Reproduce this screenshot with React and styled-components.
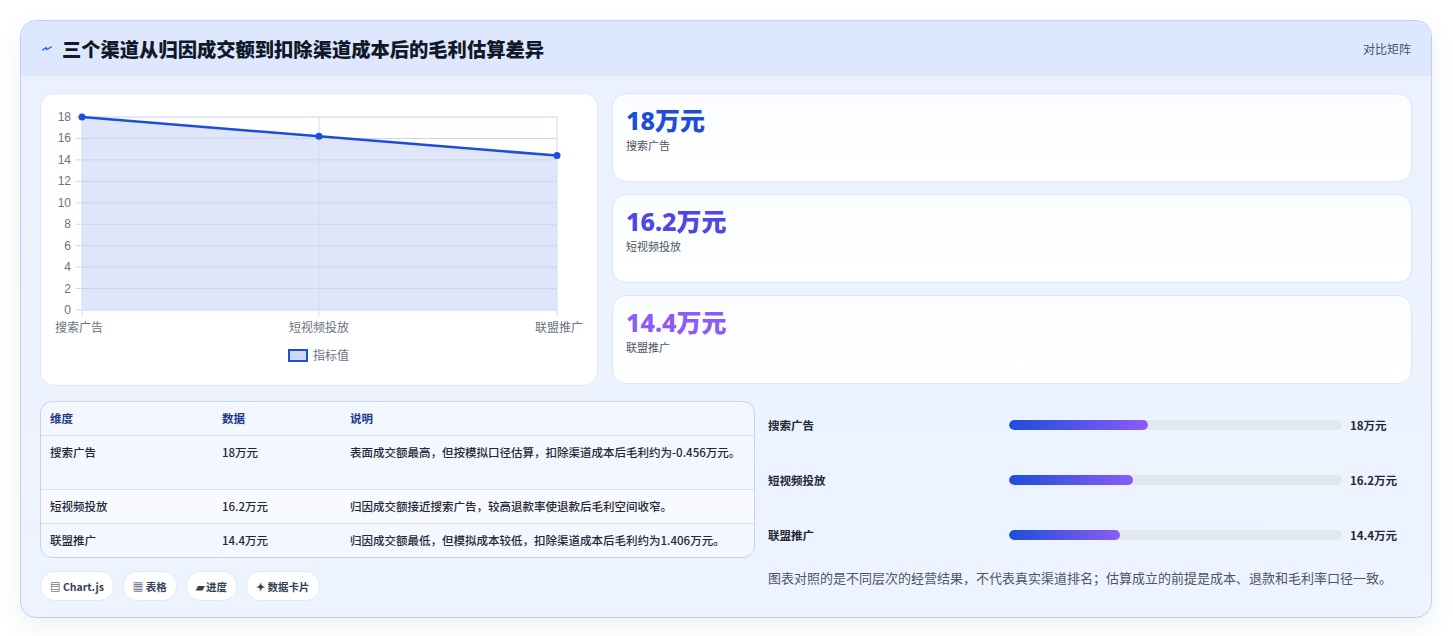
import React from "react";
import styled, { createGlobalStyle } from "styled-components";

const Global = createGlobalStyle`
  html, body { margin: 0; background: #ffffff; }
  body { font-family: "Noto Sans CJK SC", "Noto Sans", sans-serif; }
`;

const Page = styled.div`
  padding: 20px 21px 22px 20px;
`;

const Card = styled.div`
  border: 1px solid #c3cdf5;
  border-radius: 16px;
  overflow: hidden;
  background: linear-gradient(180deg, #eaf0fd 0%, #eef4ff 100%);
  box-shadow: 0 8px 24px rgba(30, 58, 138, 0.08);
`;

const Header = styled.div`
  height: 55px;
  display: flex;
  align-items: center;
  justify-content: space-between;
  padding: 0 20px;
  background: #dde7fe;
`;

const Title = styled.h1`
  margin: 0;
  display: flex;
  align-items: center;
  gap: 9px;
  font-size: 19.3px;
  font-weight: 800;
  color: #111827;
`;

const Badge = styled.span`
  font-size: 12px;
  color: #475569;
`;

const Body = styled.div`
  padding: 17px 19px 16px 19px;
  display: flex;
  flex-direction: column;
  gap: 15px;
`;

const Grid = styled.div`
  display: grid;
  grid-template-columns: ${(p) => p.$left}px 1fr;
  column-gap: ${(p) => p.$gap}px;
`;

const ChartCard = styled.div`
  height: 291px;
  background: #ffffff;
  border: 1px solid #e0e7fb;
  border-radius: 14px;
  overflow: hidden;
`;

const Stats = styled.div`
  display: flex;
  flex-direction: column;
  gap: 12px;
`;

const Stat = styled.div`
  height: 89px;
  box-sizing: border-box;
  padding: 9px 13px;
  background: linear-gradient(180deg, #fbfcff, #ffffff);
  border: 1px solid #dde5fb;
  border-radius: 14px;
`;

const StatValue = styled.div`
  font-family: "Noto Sans", "Noto Sans CJK SC", sans-serif;
  font-size: 25px;
  font-weight: 800;
  line-height: 34px;
  color: ${(p) => p.$color};
`;

const StatLabel = styled.div`
  font-size: 11px;
  color: #4b5563;
`;

const Table = styled.div`
  border: 1px solid #c9d3ee;
  border-radius: 12px;
  overflow: hidden;
  background: #f3f7ff;
  font-size: 11.5px;
`;

const Row = styled.div`
  display: grid;
  grid-template-columns: 172px 128px 1fr;
  padding: 8px 9px;
  border-top: ${(p) => (p.$head ? "none" : "1px solid #d6def2")};
  background: ${(p) => (p.$alt ? "#f8faff" : "transparent")};
  color: ${(p) => (p.$head ? "#1e3a8a" : "#1f2937")};
  font-weight: ${(p) => (p.$head ? 700 : 500)};
  line-height: 17px;
  min-height: ${(p) => (p.$tall ? "37px" : "17px")};
`;

const Chips = styled.div`
  display: flex;
  gap: 9px;
  margin-top: 13px;
`;

const Chip = styled.span`
  height: 28px;
  padding: 0 9px;
  display: inline-flex;
  align-items: center;
  gap: 3px;
  border-radius: 14px;
  background: #ffffff;
  border: 1px solid #e3e8f5;
  font-size: 10.5px;
  font-weight: 600;
  color: #334155;
`;

const Progress = styled.div`
  margin-top: -4px;
  padding: 0 14px 0 0;
  display: flex;
  flex-direction: column;
`;

const PRow = styled.div`
  height: 55px;
  display: grid;
  grid-template-columns: 233px 333px 1fr;
  column-gap: 8px;
  align-items: center;
  font-size: 11.5px;
  font-weight: 600;
  color: #1f2937;
`;

const Track = styled.div`
  height: 10px;
  border-radius: 5px;
  background: #e2e8f0;
  overflow: hidden;
`;

const Fill = styled.div`
  height: 100%;
  border-radius: 5px;
  background: linear-gradient(90deg, #1d4ed8, #8b5cf6);
`;

const Note = styled.p`
  margin: 6px 0 0;
  font-size: 13px;
  color: #4b5563;
`;

const Bolt = () => (
  <svg width="12" height="12" viewBox="0 0 24 24">
    <path d="M3 14 L10 9 L11 13 L21 8" fill="none" stroke="#2563eb" strokeWidth="2.5" strokeLinecap="round" />
  </svg>
);

const data = [
  { label: "搜索广告", value: 18, color: "#1d4ed8" },
  { label: "短视频投放", value: 16.2, color: "#4f46e5" },
  { label: "联盟推广", value: 14.4, color: "#8b5cf6" },
];

const Chart = () => {
  const x0 = 41, x1 = 516, y0 = 216, yTop = 23;
  const sy = (v) => y0 - ((y0 - yTop) * v) / 18;
  const xs = [x0, (x0 + x1) / 2 - 0.5, x1];
  const pts = data.map((d, i) => [xs[i], sy(d.value)]);
  const ticks = [0, 2, 4, 6, 8, 10, 12, 14, 16, 18];
  return (
    <svg width="558" height="291" style={{ display: "block" }}>
      <polygon
        points={`${x0},${y0} ${pts.map((p) => p.join(",")).join(" ")} ${x1},${y0}`}
        fill="#dfe6f9"
      />
      {ticks.map((t) => (
        <g key={t}>
          <line x1={x0 - 6} x2={x1} y1={sy(t)} y2={sy(t)} stroke="#ccd4ea" strokeWidth="1" />
          <text x={x0 - 11} y={sy(t) + 4} textAnchor="end" fontSize="12" fill="#6b7280" fontFamily="Liberation Sans, sans-serif">{t}</text>
        </g>
      ))}
      {xs.map((x, i) => (
        <line key={i} x1={x} x2={x} y1={yTop} y2={y0 + 6} stroke="#d4dbee" />
      ))}
      <polyline points={pts.map((p) => p.join(",")).join(" ")} fill="none" stroke="#1d4ed8" strokeWidth="2.5" />
      {pts.map((p, i) => (
        <circle key={i} cx={p[0]} cy={p[1]} r="3.5" fill="#1d4ed8" />
      ))}
      {data.map((d, i) => (
        <text key={d.label} x={xs[i]} y={238} textAnchor={i === 0 ? "start" : i === 2 ? "end" : "middle"} dx={i === 0 ? -27 : i === 2 ? 26 : 0} fontSize="12" fill="#6b7280">{d.label}</text>
      ))}
      <rect x="248" y="256" width="18" height="11" fill="#cfdaf8" stroke="#1d4ed8" strokeWidth="2" />
      <text x="272" y="266" fontSize="12" fill="#6b7280">指标值</text>
    </svg>
  );
};

const rows = [
  ["搜索广告", "18万元", "表面成交额最高，但按模拟口径估算，扣除渠道成本后毛利约为-0.456万元。"],
  ["短视频投放", "16.2万元", "归因成交额接近搜索广告，较高退款率使退款后毛利空间收窄。"],
  ["联盟推广", "14.4万元", "归因成交额最低，但模拟成本较低，扣除渠道成本后毛利约为1.406万元。"],
];

const pct = [41.7, 37.2, 33.3];

export default function App() {
  return (
    <Page>
      <Global />
      <Card>
        <Header>
          <Title><Bolt />三个渠道从归因成交额到扣除渠道成本后的毛利估算差异</Title>
          <Badge>对比矩阵</Badge>
        </Header>
        <Body>
          <Grid $left={558} $gap={14}>
            <ChartCard><Chart /></ChartCard>
            <Stats>
              {data.map((d) => (
                <Stat key={d.label}>
                  <StatValue $color={d.color}>{d.value}万元</StatValue>
                  <StatLabel>{d.label}</StatLabel>
                </Stat>
              ))}
            </Stats>
          </Grid>
          <Grid $left={715} $gap={13}>
            <div>
              <Table>
                <Row $head><span>维度</span><span>数据</span><span>说明</span></Row>
                {rows.map((r, i) => (
                  <Row key={r[0]} $alt={i === 1} $tall={i === 0}>
                    <span>{r[0]}</span><span>{r[1]}</span><span>{r[2]}</span>
                  </Row>
                ))}
              </Table>
              <Chips>
                <Chip>▤ Chart.js</Chip>
                <Chip>▦ 表格</Chip>
                <Chip>▰ 进度</Chip>
                <Chip>✦ 数据卡片</Chip>
              </Chips>
            </div>
            <Progress>
              {data.map((d, i) => (
                <PRow key={d.label}>
                  <span>{d.label}</span>
                  <Track><Fill style={{ width: `${pct[i]}%` }} /></Track>
                  <span>{d.value}万元</span>
                </PRow>
              ))}
              <Note>图表对照的是不同层次的经营结果，不代表真实渠道排名；估算成立的前提是成本、退款和毛利率口径一致。</Note>
            </Progress>
          </Grid>
        </Body>
      </Card>
    </Page>
  );
}
